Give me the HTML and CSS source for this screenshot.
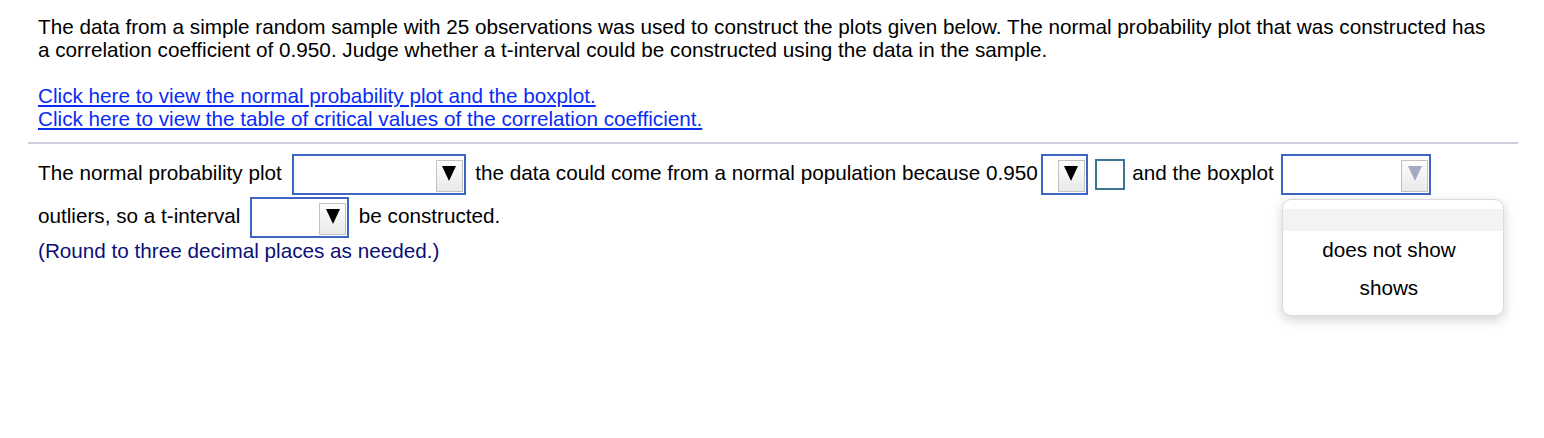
FILE: index.html
```html
<!DOCTYPE html>
<html lang="en">
<head>
    <meta charset="UTF-8">
    <title>t-Interval Question</title>
    <link rel="stylesheet" href="styles.css">
</head>
<body>

<div class="content">
    <p class="question">The data from a simple random sample with 25 observations was used to construct the plots given below. The normal probability plot that was constructed has a correlation coefficient of 0.950. Judge whether a t-interval could be constructed using the data in the sample.</p>

    <div class="links">
        <a href="#">Click here to view the normal probability plot and the boxplot.</a><br>
        <a href="#">Click here to view the table of critical values of the correlation coefficient.</a>
    </div>

    <hr class="divider">

    <p class="answer">The normal probability plot <span class="dropdown dd-plot"><span class="dd-button"><svg width="14" height="15" viewBox="0 0 14 15"><polygon points="0,0 14,0 7,15"/></svg></span></span> the data could come from a normal population because 0.950<span class="dropdown dd-compare"><span class="dd-button"><svg width="14" height="15" viewBox="0 0 14 15"><polygon points="0,0 14,0 7,15"/></svg></span></span> <span class="answer-box"></span> and the boxplot <span class="dropdown dd-boxplot open"><span class="dd-button"><svg width="14" height="15" viewBox="0 0 14 15"><polygon points="0,0 14,0 7,15"/></svg></span><span class="dd-menu"><span class="dd-option blank"></span><span class="dd-option">does not show</span><span class="dd-option">shows</span></span></span> outliers, so a t-interval <span class="dropdown dd-could"><span class="dd-button"><svg width="14" height="15" viewBox="0 0 14 15"><polygon points="0,0 14,0 7,15"/></svg></span></span> be constructed.</p>

    <p class="note">(Round to three decimal places as needed.)</p>
</div>

</body>
</html>
```

FILE: styles.css
```css
* {
    box-sizing: border-box;
}

html, body {
    min-height: 100vh;
}

body {
    margin: 0;
    font-family: "Liberation Sans", Arial, sans-serif;
    font-size: 20.7px;
    line-height: 23px;
    color: #000;
    background-color: #fff;
}

.content {
    width: 1490px;
    margin-left: 28px;
    padding: 15px 18px 0 10px;
}

.question {
    margin: 0;
}

.links {
    margin-top: 23px;
}

.links a {
    color: #0a2cf5;
    text-decoration: underline;
}

.divider {
    margin: 12px -18px 0 -10px;
    border: none;
    height: 2px;
    background-color: #cbcfdb;
}

.answer {
    margin: 9px 0 0 0;
}

/* fake select boxes */
.dropdown {
    position: relative;
    display: inline-flex;
    justify-content: flex-end;
    align-items: flex-end;
    height: 41px;
    margin: 1px 4px;
    padding: 0 1px 1px 0;
    border: 2px solid #3e65c4;
    vertical-align: middle;
    background-color: #fff;
}

.dd-plot { width: 174px; }
.dd-compare { width: 47px; margin-left: 3px; margin-right: 1px; }
.dd-boxplot { width: 150px; margin-left: 2px; }
.dd-could { width: 99px; }

.dd-button {
    display: flex;
    justify-content: center;
    align-items: flex-start;
    width: 27px;
    height: 32px;
    padding-top: 5px;
    border: 1px solid #c2c2c2;
    background: linear-gradient(#fdfdfd, #e9e9e9);
}

.dd-button svg {
    fill: #000;
}

.dd-boxplot .dd-button svg {
    fill: #a3aac1;
}

.answer-box {
    display: inline-block;
    width: 30px;
    height: 31px;
    margin: 0 1px;
    border: 2px solid #3a7594;
    vertical-align: middle;
}

.dd-menu {
    position: absolute;
    top: 43px;
    left: -1px;
    width: 222px;
    height: 117px;
    padding-top: 9px;
    border: 1px solid #dadada;
    border-radius: 9px;
    background-color: #fff;
    box-shadow: 0 4px 12px rgba(0, 0, 0, 0.18);
    z-index: 10;
}

.dd-option {
    display: block;
    height: 38px;
    line-height: 38px;
    padding-right: 9px;
    text-align: center;
}

.dd-option.blank {
    height: 22px;
    background-color: #f3f3f3;
}

.note {
    margin: 0;
    color: #0b0f78;
}
```
